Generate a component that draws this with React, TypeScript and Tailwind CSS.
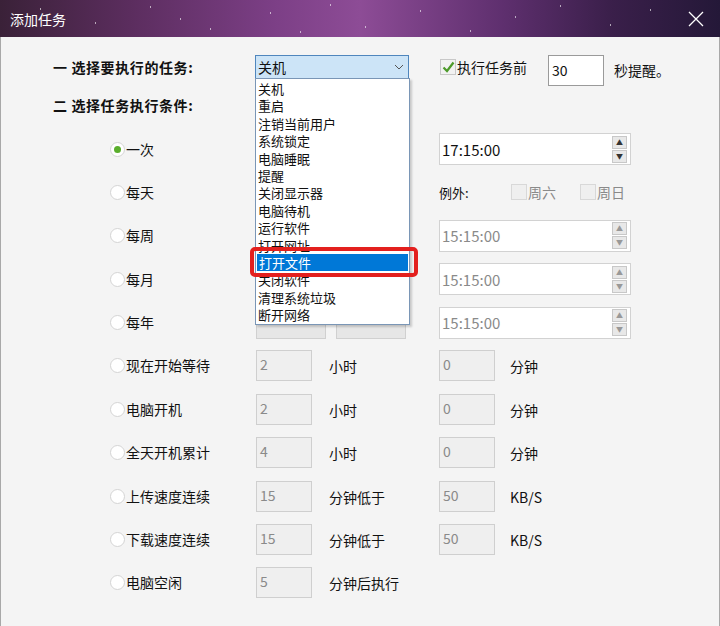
const font = "font-['Noto_Sans_CJK_SC','Liberation_Sans',sans-serif]";

const tasks = ['关机', '重启', '注销当前用户', '系统锁定', '电脑睡眠', '提醒', '关闭显示器', '电脑待机', '运行软件', '打开网址', '打开文件', '关闭软件', '清理系统垃圾', '断开网络'];

const stars = [
  [40, 8], [95, 22], [150, 6], [210, 28], [270, 12], [330, 4], [365, 26], [420, 10], [470, 30], [515, 16], [560, 5], [610, 24], [650, 9], [300, 31], [180, 18],
];

function Radio({ checked }: { checked?: boolean }) {
  return (
    <span className="w-[15px] h-[15px] rounded-full border border-[#d4d4d4] bg-white flex items-center justify-center shrink-0">
      {checked && <span className="w-[7px] h-[7px] rounded-full bg-[#5aae2c]" />}
    </span>
  );
}

function Spinner({ enabled }: { enabled?: boolean }) {
  const c = enabled ? 'text-[#333]' : 'text-[#999]';
  return (
    <div className="flex flex-col gap-[1px] mr-[3px]">
      <span className={`w-[15px] h-[13px] border border-[#c8c8c8] bg-[#e8e8e8] flex items-center justify-center text-[7px] leading-none ${c}`}>▲</span>
      <span className={`w-[15px] h-[13px] border border-[#c8c8c8] bg-[#e8e8e8] flex items-center justify-center text-[7px] leading-none ${c}`}>▼</span>
    </div>
  );
}

function TimeBox({ value, enabled }: { value: string; enabled?: boolean }) {
  return (
    <div className="w-[192px] h-[32px] bg-white border border-[#d2d2d2] flex items-center justify-between">
      <span className={`pl-[2px] text-[15px] leading-none ${enabled ? 'text-[#111]' : 'text-[#8a8a8a]'}`}>{value}</span>
      <Spinner enabled={enabled} />
    </div>
  );
}

function NumBox({ value }: { value: string }) {
  return (
    <div className="w-[56px] h-[31px] bg-[#efefef] border border-[#cfcfcf] px-[3px] pt-[4px] text-[14px] leading-[18px] text-[#8a8a8a]">
      {value}
    </div>
  );
}

function Check({ checked, label, dim }: { checked?: boolean; label: string; dim?: boolean }) {
  return (
    <div className="flex items-center">
      <span className={`w-[16px] h-[16px] border flex items-center justify-center ${dim ? 'border-[#d8d8d8] bg-[#efefef]' : 'border-[#c8c8c8] bg-[#f2f2f2]'}`}>
        {checked && (
          <svg width="13" height="12" viewBox="0 0 13 12">
            <path d="M1.5 6.5 L5 10 L11.5 1.5" fill="none" stroke="#4c9a2a" strokeWidth="2.2" />
          </svg>
        )}
      </span>
      <span className={`ml-[1px] text-[14px] leading-5 ${dim ? 'text-[#8a8a8a]' : 'text-[#111]'}`}>{label}</span>
    </div>
  );
}

export default function App() {
  const lower = [
    { label: '现在开始等待', a: '2', ua: '小时', b: '0', ub: '分钟' },
    { label: '电脑开机', a: '2', ua: '小时', b: '0', ub: '分钟' },
    { label: '全天开机累计', a: '4', ua: '小时', b: '0', ub: '分钟' },
    { label: '上传速度连续', a: '15', ua: '分钟低于', b: '50', ub: 'KB/S' },
    { label: '下载速度连续', a: '15', ua: '分钟低于', b: '50', ub: 'KB/S' },
    { label: '电脑空闲', a: '5', ua: '分钟后执行' },
  ];

  return (
    <div className={`w-[720px] h-[626px] overflow-hidden bg-[#f4f4f4] text-[#111] ${font}`}>
      {/* title bar */}
      <div className="relative h-[37px] bg-[linear-gradient(90deg,#3a2138_0%,#5b2d5e_18%,#7c3f86_38%,#8d4c96_50%,#5e2f6e_70%,#3a1f4a_85%,#241838_100%)] flex items-center justify-between px-[10px]">
        {stars.map(([x, y], i) => (
          <span key={i} className="absolute w-[1px] h-[2px] bg-white/60" style={{ left: x, top: y }} />
        ))}
        <span className="text-white text-[14px] leading-none">添加任务</span>
        <svg width="16" height="16" viewBox="0 0 16 16" className="mr-[6px]">
          <path d="M1 1 L15 15 M15 1 L1 15" stroke="#fff" strokeWidth="1.3" />
        </svg>
      </div>

      {/* body */}
      <div className="h-[589px] border-x border-[#a8a8a8] pt-[18px]">
        {/* row 1 */}
        <div className="flex h-[31px] items-start">
          <div className="ml-[52px] w-[202px] mt-[2px] text-[14px] leading-5 font-bold tracking-[0.6px]">一 选择要执行的任务:</div>
          <div className="relative w-[154px] z-10">
            <div className="h-[24px] bg-[#cce4f7] border border-[#4f86bd] flex items-center justify-between pl-[2px] pr-[4px]">
              <span className="text-[14px] leading-none">关机</span>
              <svg width="10" height="6" viewBox="0 0 10 6">
                <path d="M1 1 L5 5 L9 1" fill="none" stroke="#555" strokeWidth="1" />
              </svg>
            </div>
            <div className="absolute left-0 top-[23px] w-[155px] bg-white border border-[#7a96b6] shadow-[2px_2px_2px_rgba(0,0,0,0.18)] pt-[1px] pb-[1px]">
              {tasks.map((t, i) => (
                <div key={t} className={`h-[17.4px] pl-[2px] text-[13px] leading-[17.4px] ${i === 10 ? 'bg-[#0078d7] text-white mx-[1px]' : ''}`}>
                  {t}
                </div>
              ))}
              <div className="absolute left-[-6px] top-[168px] w-[168px] h-[30px] border-[4px] border-[#e3201e] rounded-[5px]" />
            </div>
          </div>
          <div className="ml-[31px] mt-[2px] w-[108px]">
            <Check checked label="执行任务前" />
          </div>
          <div className="w-[56px] h-[31px] bg-white border border-[#9a9a9a] flex items-center pl-[3px] text-[14px]">30</div>
          <div className="ml-[10px] mt-[5px] text-[14px] leading-5">秒提醒。</div>
        </div>

        {/* heading 2 */}
        <div className="ml-[52px] mt-[9px] h-[20px] text-[14px] leading-5 font-bold tracking-[0.6px]">二 选择任务执行条件:</div>

        {/* radio rows */}
        <div className="mt-[18px] flex flex-col gap-[11.4px]">
          <div className="flex h-[32px] items-center">
            <div className="ml-[109px] w-[146px] flex items-center"><Radio checked /><span className="ml-[1px] text-[14px]">一次</span></div>
            <div className="w-[183px]" />
            <TimeBox value="17:15:00" enabled />
          </div>
          <div className="flex h-[32px] items-center">
            <div className="ml-[109px] w-[146px] flex items-center"><Radio /><span className="ml-[1px] text-[14px]">每天</span></div>
            <div className="w-[183px]" />
            <span className="text-[13px] w-[72px]">例外:</span>
            <div className="w-[69px]"><Check label="周六" dim /></div>
            <Check label="周日" dim />
          </div>
          <div className="flex h-[32px] items-center">
            <div className="ml-[109px] w-[146px] flex items-center"><Radio /><span className="ml-[1px] text-[14px]">每周</span></div>
            <div className="w-[183px]" />
            <TimeBox value="15:15:00" />
          </div>
          <div className="flex h-[32px] items-center">
            <div className="ml-[109px] w-[146px] flex items-center"><Radio /><span className="ml-[1px] text-[14px]">每月</span></div>
            <div className="w-[183px]" />
            <TimeBox value="15:15:00" />
          </div>
          <div className="flex h-[32px] items-center">
            <div className="ml-[109px] w-[146px] flex items-center"><Radio /><span className="ml-[1px] text-[14px]">每年</span></div>
            <div className="w-[183px] flex gap-[10px]">
              <div className="w-[70px] h-[32px] bg-[#e6e6e6] border border-[#d0d0d0]" />
              <div className="w-[70px] h-[32px] bg-[#e6e6e6] border border-[#d0d0d0]" />
            </div>
            <TimeBox value="15:15:00" />
          </div>
          {lower.map((r) => (
            <div key={r.label} className="flex h-[32px] items-center">
              <div className="ml-[109px] w-[146px] flex items-center"><Radio /><span className="ml-[1px] text-[14px]">{r.label}</span></div>
              <div className="w-[183px] flex items-center">
                <NumBox value={r.a} />
                <span className="ml-[17px] mt-[2px] text-[14px]">{r.ua}</span>
              </div>
              {r.b && (
                <div className="flex items-center">
                  <NumBox value={r.b} />
                  <span className="ml-[15px] mt-[2px] text-[14px]">{r.ub}</span>
                </div>
              )}
            </div>
          ))}
        </div>
      </div>
    </div>
  );
}
